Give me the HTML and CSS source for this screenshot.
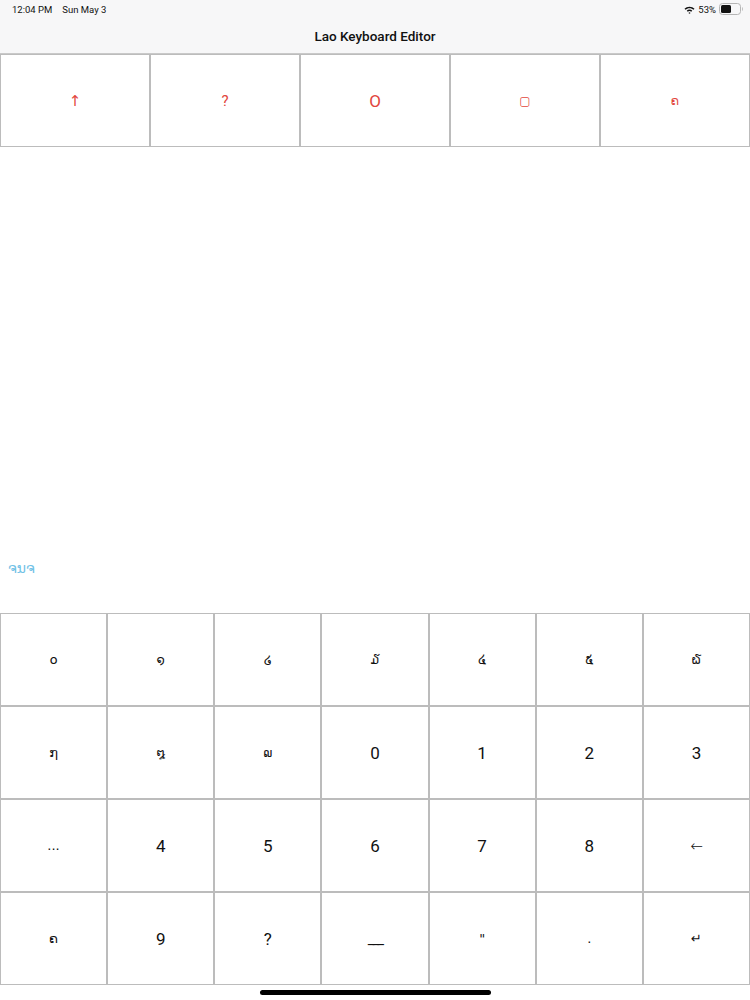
FILE: index.html
```html
<!DOCTYPE html>
<html>

<head>
    <title>Lao Keyboard Editor</title>
    <link rel="stylesheet" href="styles.css">
</head>

<body>
    <div id="screen">
        <div id="header">
            <div class="status">
                <span class="clock">12:04 PM<span class="date">Sun May 3</span></span>
                <span class="sysicons">
                    <svg class="wifi" width="11" height="9" viewBox="0 0 22 17">
                        <path d="M11 3 C15 3 18.5 4.6 21 7 L19 9.2 C17 7.2 14.2 6 11 6 C7.8 6 5 7.2 3 9.2 L1 7 C3.5 4.6 7 3 11 3 Z" fill="#111"/>
                        <path d="M11 8.6 C13.2 8.6 15.1 9.4 16.5 10.8 L14.4 13 C13.5 12.1 12.3 11.6 11 11.6 C9.7 11.6 8.5 12.1 7.6 13 L5.5 10.8 C6.9 9.4 8.8 8.6 11 8.6 Z" fill="#111"/>
                        <path d="M11 14 L13.2 15.6 L11 17 L8.8 15.6 Z" fill="#111"/>
                    </svg>
                    <span>53%</span>
                    <svg class="battery" width="25" height="12" viewBox="0 0 25 12">
                        <rect x="0.5" y="0.5" width="21" height="11" rx="3" fill="none" stroke="#b5b5b5"/>
                        <rect x="2" y="2" width="10" height="8" rx="1.5" fill="#111"/>
                        <path d="M23 4 C24.2 4.4 24.2 7.6 23 8 Z" fill="#b5b5b5"/>
                    </svg>
                </span>
            </div>
            <h1 class="title">Lao Keyboard Editor</h1>
        </div>

        <div id="modifiers">
            <span class="key mod">&#8593;</span>
            <span class="key mod">?</span>
            <span class="key mod big">O</span>
            <span class="key mod small">&#9634;</span>
            <span class="key mod small">&#3716;</span>
        </div>

        <div id="editor">
            <p class="preview">&#3720;&#3737;&#3720;</p>
        </div>

        <div id="keys">
            <span class="key lao">&#3792;</span>
            <span class="key lao">&#3793;</span>
            <span class="key lao">&#3794;</span>
            <span class="key lao">&#3795;</span>
            <span class="key lao">&#3796;</span>
            <span class="key lao">&#3797;</span>
            <span class="key lao">&#3798;</span>

            <span class="key lao">&#3799;</span>
            <span class="key lao">&#3800;</span>
            <span class="key lao">&#3801;</span>
            <span class="key">0</span>
            <span class="key">1</span>
            <span class="key">2</span>
            <span class="key">3</span>

            <span class="key lao">...</span>
            <span class="key">4</span>
            <span class="key">5</span>
            <span class="key">6</span>
            <span class="key">7</span>
            <span class="key">8</span>
            <span class="key thin">&#8592;</span>

            <span class="key lao">&#3716;</span>
            <span class="key">9</span>
            <span class="key">?</span>
            <span class="key under">___</span>
            <span class="key lao">"</span>
            <span class="key lao">.</span>
            <span class="key lao">&#8629;</span>
        </div>

        <div id="home"><span class="indicator"></span></div>
    </div>
</body>

</html>
```

FILE: styles.css
```css
* {
    box-sizing: border-box;
}

body {
    margin: 0;
    font-family: Roboto, "DejaVu Sans", sans-serif;
    background: #fff;
    color: #111;
}

#screen {
    width: 750px;
    height: 1000px;
    display: flex;
    flex-direction: column;
    overflow: hidden;
}

#header {
    height: 54px;
    background: #f7f7f8;
    border-bottom: 1px solid #c9c9c9;
}

.status {
    height: 18px;
    padding: 0 6px 0 12px;
    display: flex;
    justify-content: space-between;
    align-items: center;
    font-size: 9.5px;
    color: #111;
}

.date {
    margin-left: 10px;
}

.sysicons {
    display: flex;
    align-items: center;
    gap: 3px;
}

.title {
    margin: 0;
    height: 36px;
    line-height: 37px;
    text-align: center;
    font-size: 13.5px;
    font-weight: 500;
}

#modifiers {
    height: 93px;
    display: grid;
    grid-template-columns: repeat(5, 1fr);
}

.key {
    display: flex;
    align-items: center;
    justify-content: center;
    border: 1px solid #bcbcbc;
    font-size: 17px;
    background: #fff;
}

.mod {
    color: #e2453c;
    font-size: 15px;
}

.mod.big {
    font-size: 17px;
}

.mod.small {
    font-size: 12px;
    font-family: "DejaVu Sans", sans-serif;
}

#editor {
    flex: 1;
    display: flex;
    align-items: flex-end;
    padding: 0 8px 37px;
}

.preview {
    margin: 0;
    color: #72c2e6;
    font-size: 14px;
    font-family: "DejaVu Sans", sans-serif;
}

#keys {
    height: 372px;
    display: grid;
    grid-template-columns: repeat(7, 1fr);
    grid-template-rows: repeat(4, 1fr);
}

.lao {
    font-size: 13px;
    font-family: "DejaVu Sans", sans-serif;
}

.thin {
    font-weight: 300;
    font-size: 15px;
}

.under {
    font-size: 15px;
    letter-spacing: -2px;
}

#home {
    height: 15px;
    display: flex;
    justify-content: center;
    padding-top: 5px;
}

.indicator {
    width: 231px;
    height: 5px;
    border-radius: 3px;
    background: #000;
}
```
